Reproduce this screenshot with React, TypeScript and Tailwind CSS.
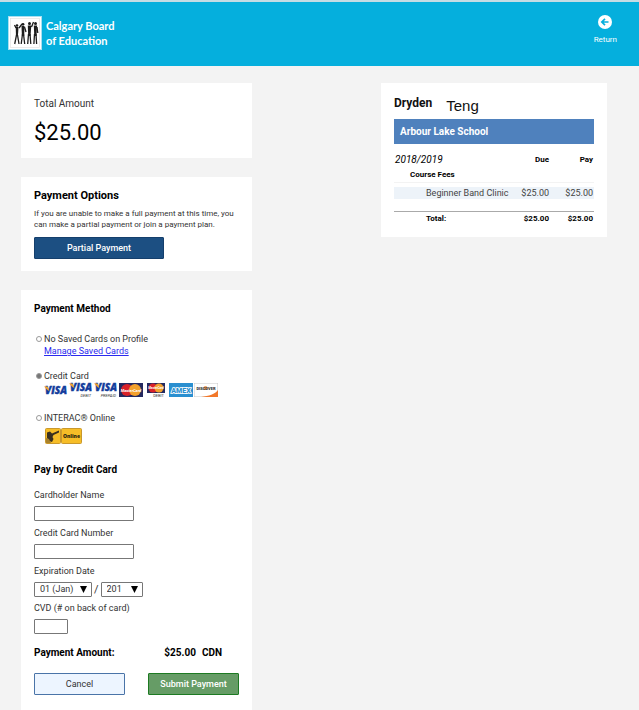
import { useState } from 'react';
import type { ReactNode } from 'react';

const FEES = [{ id: 1, name: 'Beginner Band Clinic', due: 25, pay: 25 }];

const money = (n: number) => `$${n.toFixed(2)}`;

function Card({ children, className = '' }: { children: ReactNode; className?: string }) {
  return <section className={`bg-white px-[13px] ${className}`}>{children}</section>;
}

function BoardLogo() {
  return (
    <svg className="h-[34px] w-[34px]" viewBox="0 0 34 34" aria-hidden="true">
      <rect x="0.5" y="0.5" width="33" height="33" fill="#fff" stroke="#a9dff0" />
      <rect x="2.5" y="2.5" width="29" height="29" fill="#fff" stroke="#dedede" strokeWidth="0.6" />
      <g stroke="#1c1c1c" fill="none" strokeWidth="1.300" strokeLinejoin="round">
        <path d="M6.500 9l1.500 3M8.500 19l-1.800 9M9.500 19l1.500 9M11 12l3-4" />
        <path d="M14.500 18l-1.300 10M15.500 18l1.200 10M16.500 11l1.500 5" />
        <path d="M20.500 18l-.8 10M22 18l.8 10M23.500 11l2-5" />
        <path d="M26.500 18l-.6 10M28 18l.6 10M29 11l.8 6" />
      </g>
      <g fill="#1c1c1c">
        <path d="M7.700 11h2.800l-.6 9H8z" />
        <path d="M13.500 10h3l-.3 10h-2.300z" />
        <path d="M19.800 9.500h3.500l-.8 10.500h-2.300z" />
        <path d="M25.800 9.500h3.300l-.6 10.500h-2.200z" />
        <circle cx="9" cy="9.500" r="1.300" />
        <circle cx="15" cy="8.300" r="1.400" />
        <circle cx="21.500" cy="7.500" r="1.500" />
        <circle cx="27.500" cy="7.500" r="1.500" />
      </g>
    </svg>
  );
}

function Visa({ kind }: { kind?: string }) {
  return (
    <svg className="h-4 w-[25px] overflow-visible" viewBox="0 0 25 16" aria-hidden="true">
      <text
        x="1"
        y={kind ? 9 : 12}
        fontFamily="Open Sans, sans-serif"
        fontSize="10"
        fontWeight="800"
        fontStyle="italic"
        fill="#123c9c"
        stroke="#123c9c"
        strokeWidth="0.400"
      >
        VISA
      </text>
      <path d={kind ? 'M0 1.500h3.500l2 4.500-2-1z' : 'M0 4.500h3.500l2 4.500-2-1z'} fill="#f0a52c" />
      {kind && (
        <text x="22" y="14.500" textAnchor="end" fontFamily="Roboto, sans-serif" fontSize="4" fontStyle="italic" fill="#333">
          {kind}
        </text>
      )}
    </svg>
  );
}

function MasterCard() {
  return (
    <svg className="h-4 w-[25px]" viewBox="0 0 25 16" aria-hidden="true">
      <rect x="0" y="1" width="24" height="14" fill="#24295f" />
      <circle cx="8" cy="8" r="6" fill="#d92129" />
      <circle cx="16" cy="8" r="6" fill="#f3a12c" />
      <text x="12" y="9.500" textAnchor="middle" fontFamily="Roboto, sans-serif" fontSize="4" fontWeight="700" fontStyle="italic" fill="#fff">
        MasterCard
      </text>
    </svg>
  );
}

function MasterCardDebit() {
  return (
    <svg className="h-4 w-[25px]" viewBox="0 0 25 16" aria-hidden="true">
      <rect x="3" y="1" width="18" height="10" fill="#24295f" />
      <circle cx="9" cy="6" r="4.500" fill="#d92129" />
      <circle cx="15" cy="6" r="4.500" fill="#f3a12c" />
      <text x="12" y="7" textAnchor="middle" fontFamily="Roboto, sans-serif" fontSize="3" fontWeight="700" fontStyle="italic" fill="#fff">
        MasterCard
      </text>
      <text x="20" y="15" textAnchor="end" fontFamily="Roboto, sans-serif" fontSize="4" fill="#333">
        DEBIT
      </text>
    </svg>
  );
}

function Amex() {
  return (
    <svg className="h-4 w-[25px]" viewBox="0 0 25 16" aria-hidden="true">
      <rect x="0" y="1" width="24" height="14" fill="#2a8fd0" />
      <text x="12" y="10.500" textAnchor="middle" fontFamily="Roboto, sans-serif" fontSize="7" fontWeight="900" fill="#2a8fd0" stroke="#fff" strokeWidth="1.600" paintOrder="stroke">
        AMEX
      </text>
    </svg>
  );
}

function Discover() {
  return (
    <svg className="h-4 w-[25px]" viewBox="0 0 25 16" aria-hidden="true">
      <rect x="0.250" y="1.250" width="23.500" height="13.500" fill="#fff" stroke="#c9c9c9" strokeWidth="0.500" />
      <path d="M24 8v7H7c8-1 14-3 17-7z" fill="#f2782a" />
      <circle cx="11.500" cy="6" r="2" fill="#f2a05a" />
      <text x="12" y="7.500" textAnchor="middle" fontFamily="Roboto, sans-serif" fontSize="4" fontWeight="900" fill="#333">
        DISCOVER
      </text>
    </svg>
  );
}

function Interac() {
  return (
    <svg className="h-4 w-[38px]" viewBox="0 0 38 16" aria-hidden="true">
      <rect x="0.500" y="0.500" width="15" height="15" rx="1" fill="#f6bd27" stroke="#c9982c" />
      <path d="M2 4.500l3-1 2 2 7-3v2L8.500 7l-1 2 1 2-1.500 3-3-1-2-3z" fill="#3a3020" />
      <path d="M1 10l3 1 2 4H1z" fill="#a9822c" />
      <rect x="16.500" y="0.500" width="20" height="15" rx="1" fill="#f6bd27" stroke="#c9982c" />
      <text x="26.500" y="10" textAnchor="middle" fontFamily="Open Sans, sans-serif" fontSize="5" fontWeight="800" fill="#2d2510">
        Online
      </text>
    </svg>
  );
}

function MethodRadio({ id, checked, onChange, children }: { id: string; checked: boolean; onChange: () => void; children: ReactNode }) {
  return (
    <div className="flex items-center gap-[2px] pl-[2px]">
      <input
        type="radio"
        id={id}
        name="method"
        checked={checked}
        onChange={onChange}
        className="h-[6px] w-[6px] appearance-none rounded-full border border-[#9a9a9a] bg-white checked:bg-[#777]"
      />
      <label htmlFor={id}>{children}</label>
    </div>
  );
}

function Field({ id, label, className }: { id: string; label: string; className: string }) {
  return (
    <div className="mb-[6px]">
      <label htmlFor={id} className="block">{label}</label>
      <input id={id} type="text" className={`mt-[5px] block h-[15px] rounded-[1px] border border-[#777] bg-white px-1 ${className}`} />
    </div>
  );
}

function Dropdown({ label, options, className }: { label: string; options: string[]; className: string }) {
  return (
    <div className={`relative ${className}`}>
      <select
        aria-label={label}
        className="block h-[15px] w-full appearance-none rounded-[1px] border border-[#777] bg-white pl-[5px] text-[9px] leading-[13px] text-[#333]"
      >
        {options.map((o) => (
          <option key={o}>{o}</option>
        ))}
      </select>
      <svg className="pointer-events-none absolute top-1 right-[5px] h-[7px] w-[7px]" viewBox="0 0 7 7" aria-hidden="true">
        <path d="M0 0h7L3.500 7z" fill="#000" />
      </svg>
    </div>
  );
}

function FeeSummary() {
  const due = FEES.reduce((sum, fee) => sum + fee.due, 0);
  const pay = FEES.reduce((sum, fee) => sum + fee.pay, 0);

  return (
    <Card className="pt-3 pb-[11px]">
      <h2 className="flex h-6 items-start gap-[14px] text-[12px] leading-[17px] font-bold text-[#111]">
        Dryden
        <span className="pt-[2px] font-['Liberation_Sans',sans-serif] text-[15px] font-normal">Teng</span>
      </h2>
      <h3 className="bg-[#4f81bd] px-[6px] text-[10px] leading-[25px] font-bold text-white">Arbour Lake School</h3>
      <table className="mt-2 w-full border-collapse text-right text-[9px] leading-3 text-[#444]">
        <thead className="text-[8px] text-black">
          <tr className="h-4">
            <th className="pl-[1px] text-left text-[10px] font-normal italic">2018/2019</th>
            <th className="w-8 font-bold">Due</th>
            <th className="w-[45px] pr-[1px] font-bold">Pay</th>
          </tr>
          <tr className="h-[14px] border-b border-[#f3f3f3]">
            <th colSpan={3} className="pl-4 text-left font-bold">Course Fees</th>
          </tr>
        </thead>
        <tbody>
          <tr className="h-[5px]"><td colSpan={3} /></tr>
          {FEES.map((fee) => (
            <tr key={fee.id} className="bg-[#edf3f9]">
              <td className="pl-8 text-left whitespace-nowrap">{fee.name}</td>
              <td>{money(fee.due)}</td>
              <td className="pr-[1px]">{money(fee.pay)}</td>
            </tr>
          ))}
          <tr className="h-3"><td colSpan={3} /></tr>
        </tbody>
        <tfoot>
          <tr className="h-[15px] border-t border-[#aaa] font-bold text-black">
            <td className="pl-8 text-left text-[8px]">Total:</td>
            <td className="text-[8px]">{money(due)}</td>
            <td className="pr-[1px] text-[8px]">{money(pay)}</td>
          </tr>
        </tfoot>
      </table>
    </Card>
  );
}

export default function App() {
  const [method, setMethod] = useState('credit');

  return (
    <div className="flex min-h-screen flex-col bg-[#f3f3f3] font-[Roboto,sans-serif] text-[9px] leading-3 text-[#333]">
      <header className="flex h-[66px] items-start justify-between border-t-2 border-[#c5dce4] bg-[#05afdd] pr-[22px] pl-2 text-white">
        <div className="flex items-center gap-1 pt-[14px]">
          <BoardLogo />
          <p className="font-[Lato,sans-serif] text-[11px] leading-[15px] font-bold">
            Calgary Board
            <br />
            of Education
          </p>
        </div>
        <a href="#return" className="flex flex-col items-center gap-[5px] pt-[13px] text-[8px]">
          <svg className="h-[14px] w-[14px]" viewBox="0 0 14 14" aria-hidden="true">
            <circle cx="7" cy="7" r="7" fill="#fff" />
            <path d="M10.500 7H4M7 3.800L3.800 7 7 10.200" fill="none" stroke="#05afdd" strokeWidth="1.700" />
          </svg>
          Return
        </a>
      </header>

      <main className="grid flex-1 grid-cols-[231fr_226fr] gap-x-[129px] pt-[17px] pr-8 pl-[21px]">
        <div className="flex flex-col gap-[19px]">
          <Card className="pt-[14px] pb-3">
            <h2 className="text-[10px] leading-[14px]">Total Amount</h2>
            <p className="mt-2 text-[22px] leading-[27px] text-black">{money(25)}</p>
          </Card>

          <Card className="pt-3 pb-3">
            <h2 className="text-[11px] leading-[14px] font-bold text-black">Payment Options</h2>
            <p className="mt-[5px] text-[8px] leading-[11px]">
              If you are unable to make a full payment at this time, you can make a partial payment or join a payment plan.
            </p>
            <button type="button" className="mt-[7px] block h-[22px] w-[130px] rounded-[1px] border border-[#153f6c] bg-[#1c4f82] text-[9px] font-medium text-white">
              Partial Payment
            </button>
          </Card>

          <Card className="flex-1 pt-3 pb-[15px]">
            <form onSubmit={(e) => e.preventDefault()}>
              <h2 className="text-[10px] leading-[14px] font-bold text-black">Payment Method</h2>
              <div className="mt-[17px]">
                <MethodRadio id="saved" checked={method === 'saved'} onChange={() => setMethod('saved')}>
                  No Saved Cards on Profile
                </MethodRadio>
                <a href="#cards" className="ml-[10px] block w-fit text-[#2a2aee] underline">Manage Saved Cards</a>
              </div>
              <div className="mt-[13px]">
                <MethodRadio id="credit" checked={method === 'credit'} onChange={() => setMethod('credit')}>
                  Credit Card
                </MethodRadio>
                <div className="ml-[10px] flex">
                  <Visa />
                  <Visa kind="DEBIT" />
                  <Visa kind="PREPAID" />
                  <MasterCard />
                  <MasterCardDebit />
                  <Amex />
                  <Discover />
                </div>
              </div>
              <div className="mt-[14px]">
                <MethodRadio id="interac" checked={method === 'interac'} onChange={() => setMethod('interac')}>
                  INTERAC® Online
                </MethodRadio>
                <div className="mt-1 ml-[11px]">
                  <Interac />
                </div>
              </div>

              <h2 className="mt-[19px] mb-3 text-[10px] leading-[14px] font-bold text-black">Pay by Credit Card</h2>
              <Field id="holder" label="Cardholder Name" className="w-[100px]" />
              <Field id="number" label="Credit Card Number" className="w-[100px]" />
              <fieldset className="mb-[5px]">
                <legend>Expiration Date</legend>
                <div className="mt-[5px] flex items-center gap-[2px] text-[11px]">
                  <Dropdown label="Month" options={['01 (Jan)', '02 (Feb)', '03 (Mar)']} className="w-[58px]" />
                  /
                  <Dropdown label="Year" options={['201']} className="w-[42px]" />
                </div>
              </fieldset>
              <Field id="cvd" label="CVD (# on back of card)" className="w-[34px]" />

              <div className="mt-[13px] flex justify-between pr-[17px] text-[10px] font-bold text-black">
                <span>Payment Amount:</span>
                <span className="flex gap-[6px]">
                  <span>{money(25)}</span>
                  <span>CDN</span>
                </span>
              </div>
              <div className="mt-[14px] flex justify-between">
                <button type="button" className="h-[22px] w-[91px] rounded-[1px] border border-[#4a74a8] bg-[#edf5ff]">
                  Cancel
                </button>
                <button type="submit" className="h-[22px] w-[91px] rounded-[1px] border border-[#1d7a22] bg-[#669c66] font-medium text-white">
                  Submit Payment
                </button>
              </div>
            </form>
          </Card>
        </div>

        <div>
          <FeeSummary />
        </div>
      </main>
    </div>
  );
}
